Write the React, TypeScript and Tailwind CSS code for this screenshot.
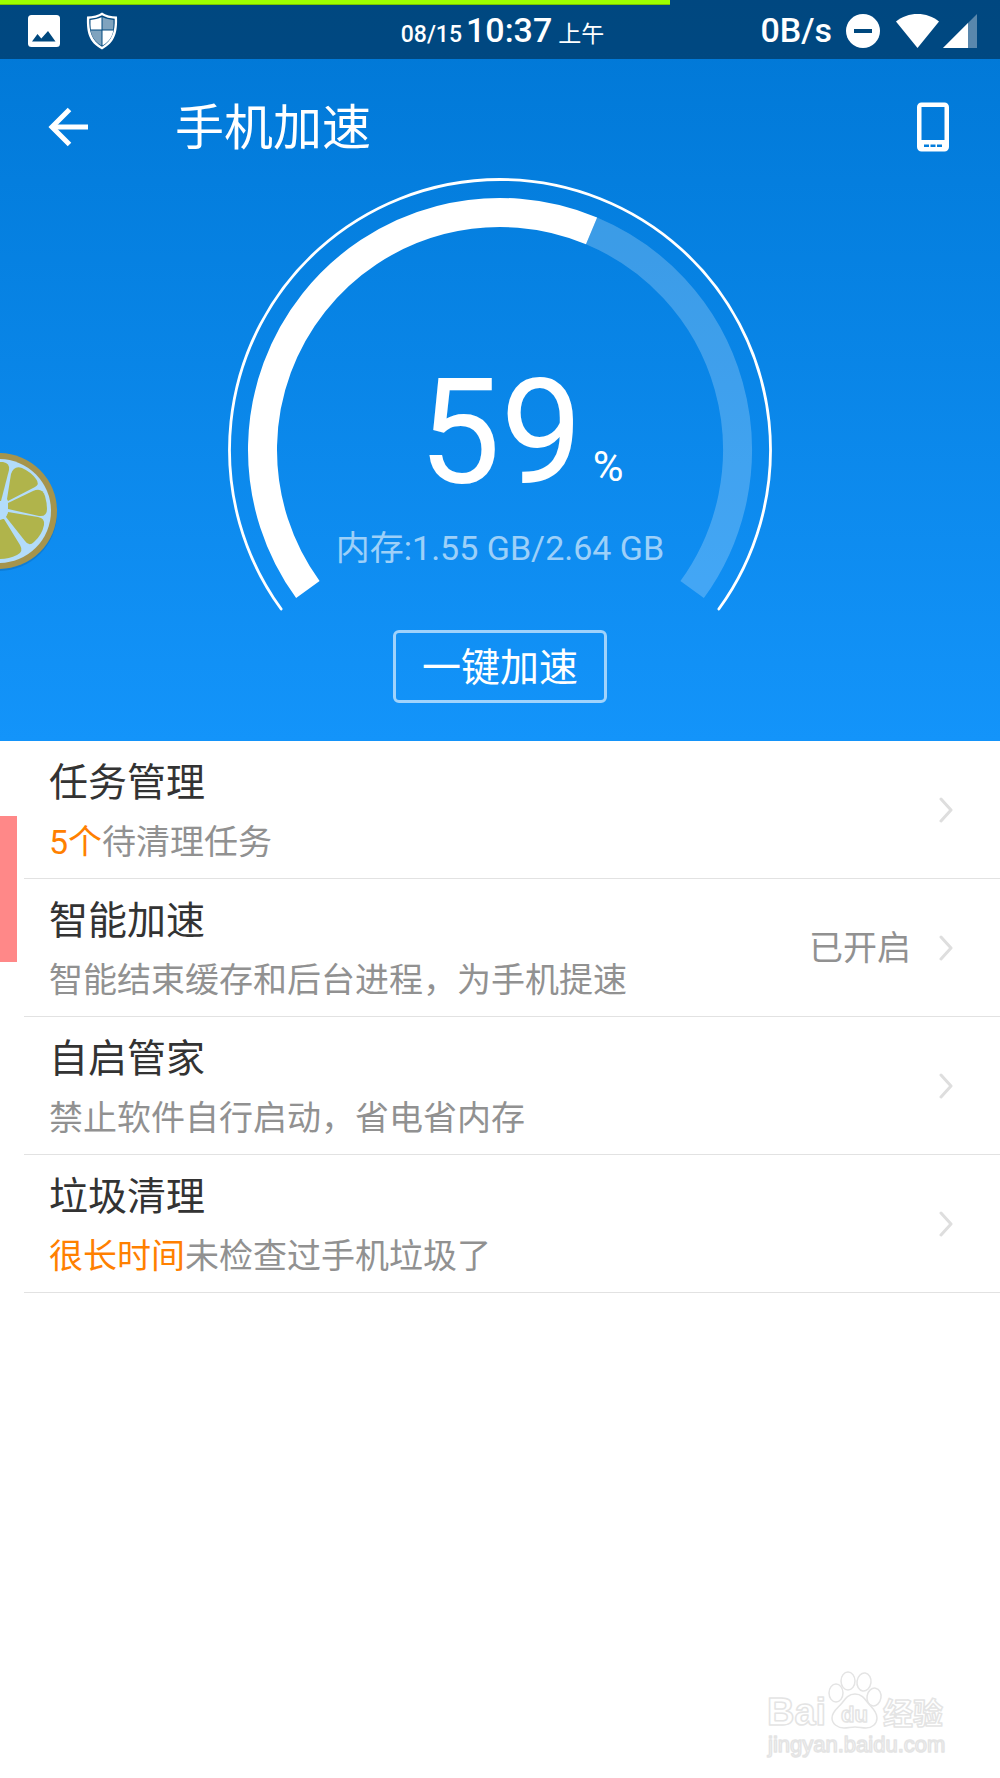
import type { ReactNode } from 'react';

const USED_PERCENT = 59;

const rows: { title: string; highlight?: string; text: string; status?: string }[] = [
  { title: '任务管理', highlight: '5个', text: '待清理任务' },
  { title: '智能加速', text: '智能结束缓存和后台进程，为手机提速', status: '已开启' },
  { title: '自启管家', text: '禁止软件自行启动，省电省内存' },
  { title: '垃圾清理', highlight: '很长时间', text: '未检查过手机垃圾了' },
];

function StatusBar() {
  return (
    <div className="bg-black/40 text-white">
      <div className="h-[5px] w-[67%] border-b border-[#7fc400] bg-[#9dff00]" />
      <div className="grid h-[54px] grid-cols-[1fr_auto_1fr] items-center pr-[23px] pb-1 pl-7">
        <div className="flex items-center gap-[26px]">
          <svg width="32" height="32" viewBox="0 0 32 32" aria-hidden="true">
            <rect width="32" height="32" rx="3.5" fill="#fff" />
            <path d="M4 26.5 9.5 19l3.8 4.6L20 16l7.5 10.5Z" fill="#00487e" />
          </svg>
          <svg width="32" height="38" viewBox="0 0 32 38" aria-hidden="true">
            <path d="M16 .5C19.5 3 25 4.400 31 4.600c.6 15-1.500 26-15 32.900C2.500 30.600.4 19.600 1 4.600 7 4.400 12.500 3 16 .5Z" fill="#fff" />
            <path d="M16 3.200c3.500 2 8 3.200 12.700 3.500C29 19 26.500 28.700 16 34.700 5.500 28.700 3 19 3.300 6.700 8 6.400 12.500 5.200 16 3.200Z" fill="#00487e" />
            <path d="M15.500 5.200v12.300H4.800c-.4-3.200-.4-6.300-.3-9.600 4-.3 7.700-1.200 11-2.700Z" fill="#fff" />
            <path d="M16.500 18.500h10.800c-1 6-3.800 11-10.800 15Z" fill="#fff" />
            <path d="M16.500 5.200v12.300h10.700c.4-3.200.4-6.300.3-9.600-4-.3-7.700-1.200-11-2.700ZM15.500 18.500H4.700c1 6 3.800 11 10.800 15Z" fill="#7fa3be" />
          </svg>
        </div>
        <p className="flex items-baseline font-medium">
          <span className="text-[23px]">08/15</span>
          <span className="ml-1 text-[34px]">10:37</span>
          <span className="ml-1.5 text-[23px] font-normal">上午</span>
        </p>
        <div className="flex items-center justify-end">
          <span className="mr-3.5 text-[34px] font-medium">0B/s</span>
          <svg className="mr-4" width="34" height="34" viewBox="0 0 34 34" aria-hidden="true">
            <circle cx="17" cy="17" r="17" fill="#fff" />
            <path d="M8 15h18v4H8z" fill="#00487e" />
          </svg>
          <svg className="mr-1" width="43" height="34" viewBox="0 0 43 34" aria-hidden="true">
            <path d="M0 7.500C6 2.500 13.500 0 21.500 0S37 2.500 43 7.500L21.500 34Z" fill="#fff" />
          </svg>
          <svg width="34" height="34" viewBox="0 0 34 34" aria-hidden="true">
            <path d="M34 0v34H0Z" fill="#fff" opacity=".35" />
            <path d="M25 9v25H0Z" fill="#fff" />
          </svg>
        </div>
      </div>
    </div>
  );
}

function AppBar() {
  return (
    <div className="flex h-[119px] items-center pt-4 pr-[51px] pl-12 text-white">
      <button type="button" aria-label="返回">
        <svg width="40" height="40" viewBox="0 0 40 40" fill="none" stroke="#fff" aria-hidden="true">
          <path d="M40 20H4" strokeWidth="5" />
          <path d="M21.500 2.500 4 20l17.500 17.500" strokeWidth="5" />
        </svg>
      </button>
      <h1 className="ml-[87px] flex-1 pt-1 text-[49px]">手机加速</h1>
      <button type="button" aria-label="手机">
        <svg width="32" height="50" viewBox="0 0 32 50" aria-hidden="true">
          <path
            d="M4.500.5h23a4.500 4.500 0 0 1 4.500 4.500v40a4.500 4.500 0 0 1-4.500 4.500h-23A4.500 4.500 0 0 1 0 45V5A4.500 4.500 0 0 1 4.500.5ZM4.500 5v33h23V5ZM7 42.500V45h5v-2.500ZM13.500 42.500V45h5v-2.500ZM20 42.500V45h5v-2.500Z"
            fill="#fff"
            fillRule="evenodd"
          />
        </svg>
      </button>
    </div>
  );
}

// Point on a circle round (271, 272); degrees run clockwise from the top
function point(radius: number, degrees: number) {
  const rad = (degrees * Math.PI) / 180;
  return `${271 + radius * Math.sin(rad)} ${272 - radius * Math.cos(rad)}`;
}

function arc(radius: number, from: number, to: number) {
  const large = to - from > 180 ? 1 : 0;
  return `M${point(radius, from)}A${radius} ${radius} 0 ${large} 1 ${point(radius, to)}`;
}

function Gauge({ percent, children }: { percent: number; children: ReactNode }) {
  const split = -126 + (252 * percent) / 100;
  return (
    <div className="grid justify-items-center">
      <svg
        className="col-start-1 row-start-1 overflow-visible"
        width="542"
        height="434"
        viewBox="0 0 542 434"
        fill="none"
        stroke="#fff"
        aria-hidden="true"
      >
        <path d={arc(270.5, -126, 126)} strokeWidth="2.800" strokeLinecap="round" />
        <path d={arc(237.5, split, 126)} strokeWidth="29" opacity=".22" />
        <path d={arc(237.5, -126, split)} strokeWidth="29" />
      </svg>
      <div className="col-start-1 row-start-1 flex flex-col items-center pt-[183px] text-white">{children}</div>
    </div>
  );
}

function Chevron() {
  return (
    <svg width="14" height="26" viewBox="0 0 14 26" fill="none" stroke="#dedede" strokeWidth="3" strokeLinecap="round" strokeLinejoin="round" aria-hidden="true">
      <path d="m2 2 10 11L2 24" />
    </svg>
  );
}

function Lemon() {
  return (
    <svg className="absolute top-[453px] left-0" width="62" height="122" viewBox="0 0 62 122" aria-hidden="true">
      <circle cx="-1" cy="60" r="58" fill="#0b6dbd" opacity=".5" />
      <circle cx="-1" cy="58" r="58" fill="#a5944c" />
      <circle cx="-1" cy="58" r="52" fill="#b3dcfa" />
      <g fill="#b0b44b">
        <path d="M0 9h3q7 1 6 8L1 48H0Z" />
        <path d="M7 46 11 21q3-9 11-6 9 4 14 11 4 5-1 8L8 48Z" />
        <path d="m8 50 25-12q9-4 12 5 2 7 2 13 0 8-8 7L8 56Z" />
        <path d="m8 59 30 5q7 1 6 8-2 10-10 17-5 5-9-1L6 64Z" />
        <path d="M0 66h4l16 26q4 7-3 10-8 4-17 4Z" />
      </g>
      <circle cx="-1" cy="58" r="9" fill="#b3dcfa" />
    </svg>
  );
}

function Watermark() {
  return (
    <svg
      className="absolute right-[52px] bottom-5 font-['Liberation_Sans','Noto_Sans_CJK_SC',sans-serif] font-bold"
      width="182"
      height="90"
      viewBox="0 0 182 90"
      fill="#fff"
      stroke="#e4e4e4"
      strokeWidth="1.500"
      strokeLinejoin="round"
    >
      <text x="1" y="57" fontSize="38">Bai</text>
      <ellipse cx="70" cy="25" rx="7" ry="9" />
      <ellipse cx="82" cy="13" rx="7" ry="9" />
      <ellipse cx="98" cy="14" rx="7" ry="9" transform="rotate(8 98 14)" />
      <ellipse cx="108" cy="29" rx="7" ry="9" transform="rotate(10 108 29)" />
      <path d="M89 26c7 0 10 5 13 9 4 5 9 8 9 15 0 6-5 10-11 10-4 0-7-1-11-1s-7 1-11 1c-6 0-12-4-12-10 0-7 6-10 10-15 3-4 6-9 13-9Z" />
      <text x="75" y="54" fontSize="22">du</text>
      <text x="117" y="56" fontSize="30">经验</text>
      <text x="2" y="84" fontSize="22" className="font-normal">jingyan.baidu.com</text>
    </svg>
  );
}

export default function App() {
  return (
    <div className="relative min-h-screen bg-white font-['Roboto','Noto_Sans_CJK_SC',sans-serif]">
      <header className="bg-linear-to-b from-[#0077d5] to-[#1394fa] pb-[38px]">
        <StatusBar />
        <AppBar />
        <Gauge percent={USED_PERCENT}>
          <p className="flex items-end">
            <span className="ml-[42px] text-[146px] leading-[146px]">{USED_PERCENT}</span>
            <span className="ml-2.5 text-[42px] leading-[80px]">%</span>
          </p>
          <p className="mt-[11px] text-[34px] leading-[60px] text-white/60">内存:1.55 GB/2.64 GB</p>
        </Gauge>
        <button
          type="button"
          className="mx-auto mt-[18px] flex h-[73px] w-[214px] items-center justify-center rounded-md border-3 border-white/60 pt-1 text-[39px] text-white"
        >
          一键加速
        </button>
      </header>

      <ul>
        {rows.map((row) => (
          <li key={row.title} className="ml-6 border-b border-[#e2e2e2]">
            <button type="button" className="flex w-full items-center pr-[47px] pl-[25px] text-left">
              <span className="flex-1 pt-3 pb-[7px]">
                <span className="block text-[39px] leading-[60px] text-[#333]">{row.title}</span>
                <span className="block text-[34px] leading-[58px] text-[#919191]">
                  {row.highlight && <span className="text-[#ff8000]">{row.highlight}</span>}
                  {row.text}
                </span>
              </span>
              {row.status && <span className="mr-7 pt-0.5 text-[34px] text-[#919191]">{row.status}</span>}
              <Chevron />
            </button>
          </li>
        ))}
      </ul>

      <Lemon />
      <div className="absolute top-[816px] left-0 h-[146px] w-[17px] bg-[#ff8888]" />
      <Watermark />
    </div>
  );
}
